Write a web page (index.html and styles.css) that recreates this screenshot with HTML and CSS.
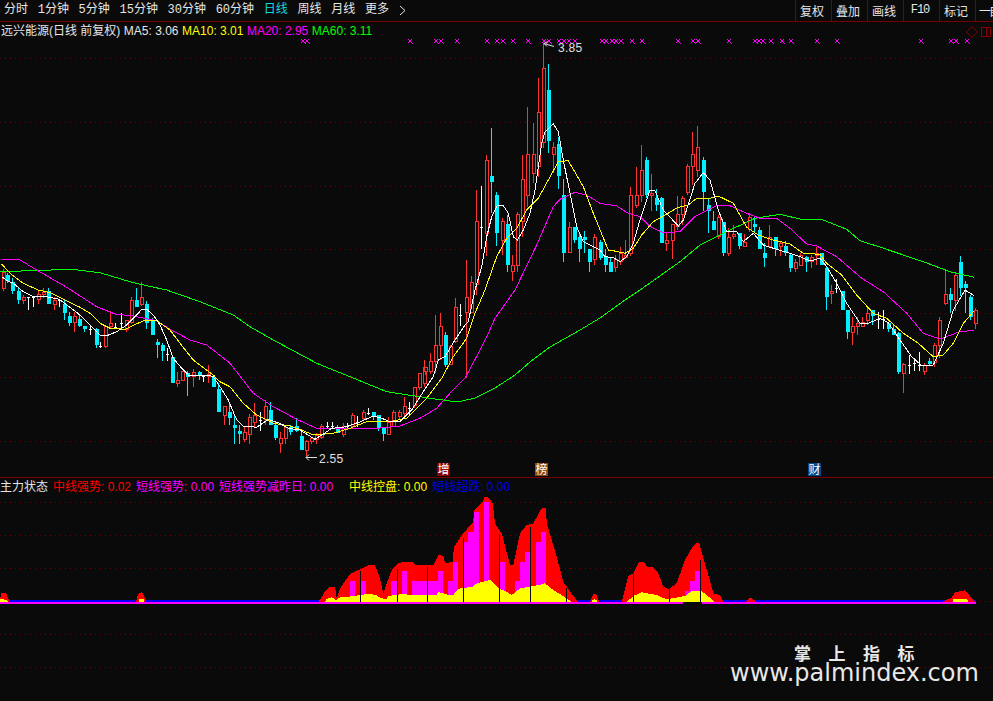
FILE: index.html
```html
<!DOCTYPE html>
<html lang="zh-CN">
<head>
<meta charset="utf-8">
<title>远兴能源 日线</title>
<link rel="stylesheet" href="styles.css">
</head>
<body>
<div class="terminal">
  <header class="toolbar">
    <nav class="periods">
      <span>分时</span><span>1分钟</span><span>5分钟</span><span>15分钟</span><span>30分钟</span><span>60分钟</span>
      <span class="active">日线</span><span>周线</span><span>月线</span><span>更多</span>
      <svg class="chevron" width="7" height="11" viewBox="0 0 7 11"><path d="M1 1l5 4.500-5 4.500" /></svg>
    </nav>
    <div class="tools">
      <span>复权</span><span>叠加</span><span>画线</span><span class="mono">F10</span><span>标记</span><span class="clip">一自</span>
    </div>
  </header>

  <section class="pane pane-main">
    <svg id="main-chart" class="chart" viewBox="0 22 993 455" width="993" height="455"></svg>
    <div class="legend">
      <span class="white">远兴能源(日线 前复权)</span>
      <span class="white">MA5: 3.06</span>
      <span class="yellow">MA10: 3.01</span>
      <span class="magenta">MA20: 2.95</span>
      <span class="green">MA60: 3.11</span>
    </div>
    <svg class="corner-icons" width="26" height="12" viewBox="0 0 26 12">
      <path d="M6 0.500l5.500 5.500-5.500 5.500-5.500-5.500z" />
      <path d="M15.500 1.500h9v9h-9zM20.500 1.500v9" />
    </svg>
  </section>

  <section class="pane pane-sub">
    <svg id="sub-chart" class="chart" viewBox="0 478 993 223" width="993" height="223"></svg>
    <div class="legend legend-sub">
      <span class="white">主力状态</span>
      <span class="red">中线强势: 0.02</span>
      <span class="magenta">短线强势: 0.00</span>
      <span class="magenta wide">短线强势减昨日: 0.00</span>
      <span class="yellow">中线控盘: 0.00</span>
      <span class="blue">短线超跌: 0.00</span>
    </div>
    <div class="watermark">
      <div class="wm-cn">掌上指标</div>
      <div class="wm-url">www.palmindex.com</div>
    </div>
  </section>
</div>
<script src="script.js"></script>
</body>
</html>
```
FILE: styles.css
```css
* { box-sizing: border-box; }
html, body { margin: 0; padding: 0; height: 100%; background: #0a0a0a; overflow: hidden; }
body { font-family: "Liberation Sans", "Noto Sans CJK SC", sans-serif; font-size: 12px; color: #e6e6e6; }
.terminal { width: 993px; height: 701px; display: flex; flex-direction: column; overflow: hidden; }

.toolbar { height: 22px; flex: none; display: flex; justify-content: space-between; border-bottom: 1px solid #7a0000; }
.periods { display: flex; align-items: center; gap: 9.7px; padding-left: 4px; font-family: "Liberation Mono", "Noto Sans CJK SC", monospace; line-height: 21px; }
.periods .active { color: #14d8e0; }
.chevron { fill: none; stroke: #e6e6e6; stroke-width: 1; }
.tools { display: flex; width: 198px; overflow: hidden; font-family: "Noto Sans CJK SC", sans-serif; }
.tools span { flex: none; width: 36px; padding-right: 3px; border-left: 1px solid #7a0000; text-align: center; line-height: 21px; white-space: nowrap; }
.tools .mono { font-family: "Liberation Mono", monospace; letter-spacing: -1px; }
.tools .clip { text-align: left; padding: 0 0 0 3px; margin-right: -20px; letter-spacing: -2px; }

.pane { position: relative; flex: none; }
.pane-main { height: 456px; border-bottom: 1px solid #7a0000; }
.pane-sub { height: 223px; }
.chart { position: absolute; left: 0; top: 0; display: block; }

.legend { position: absolute; left: 1px; top: 1px; display: flex; gap: 3.500px; line-height: 17px; white-space: nowrap; }
.legend-sub { left: 0; gap: 5px; }
.legend-sub .wide { margin-right: 11px; }
.white { color: #e6e6e6; }
.yellow { color: #ffff00; }
.magenta { color: #ff00ff; }
.green { color: #00ff00; }
.red { color: #ff0000; }
.blue { color: #0000e6; }

.corner-icons { position: absolute; right: 1px; top: 4px; fill: none; stroke: #8a0000; stroke-width: 1; }

.watermark { position: absolute; left: 730px; top: 163.500px; width: 250px; color: #e8e8e8; }
.wm-cn { padding-left: 64px; font-family: "Noto Sans CJK SC", sans-serif; font-weight: 700; font-size: 17px; letter-spacing: 17.500px; line-height: 21px; white-space: nowrap; }
.wm-url { font-family: "DejaVu Sans", sans-serif; font-size: 24px; line-height: 21px; white-space: nowrap; }

.grid-line { stroke: #6a0000; stroke-width: 1; stroke-dasharray: 1 4; }
.wick { stroke-width: 1; shape-rendering: crispEdges; }
.body { shape-rendering: crispEdges; }
.ma { fill: none; stroke-width: 1; shape-rendering: crispEdges; }
.mark { fill: none; stroke: #ff00ff; stroke-width: 1; shape-rendering: crispEdges; }
.note { fill: #e0e0e0; font-family: "Liberation Sans", sans-serif; font-size: 12px; letter-spacing: 0.3px; }
.note-line { fill: none; stroke: #e0e0e0; stroke-width: 1; }
.event-label { fill: #ffffff; font-family: "Noto Sans CJK SC", sans-serif; font-size: 12px; text-anchor: middle; }
.area { shape-rendering: crispEdges; }
```
FILE: script.js
```js
var NS = 'http://www.w3.org/2000/svg';
var BG = '#0a0a0a', RED = '#ff3232', CYAN = '#00f0ff', WHITE = '#ffffff';
var main = document.getElementById('main-chart');
var sub = document.getElementById('sub-chart');

function el(parent, tag, attrs, text) {
  var n = document.createElementNS(NS, tag);
  for (var k in attrs) n.setAttribute(k, attrs[k]);
  if (text) n.textContent = text;
  parent.appendChild(n);
  return n;
}
// Values below were read at 3x from the chart; each block has its own origin.
function toPage(ox, oy, flat) {
  var out = [];
  for (var i = 0; i < flat.length; i += 2) out.push([ox + flat[i] / 3, oy + flat[i + 1] / 3]);
  return out;
}

/* ---------- grid ---------- */
[58, 122, 186, 249, 313, 377, 441].forEach(function (y) {
  el(main, 'line', { 'class': 'grid-line', x1: 0, x2: 993, y1: y + 0.5, y2: y + 0.5 });
});
[502, 535, 568, 601, 634, 667].forEach(function (y) {
  el(sub, 'line', { 'class': 'grid-line', x1: 0, x2: 993, y1: y + 0.5, y2: y + 0.5 });
});

/* ---------- candles: [x, type, bodyTop, bodyBottom, high, low] ---------- */
var blocks = [
  { o: [0, 250], c: [
    [8,'r',67,118,57,122],[22,'c',75,92,68,100],[37,'c',95,122,85,132],[55,'c',122,150,113,162],[70,'r',142,152,135,162],
    [85,'w',142,142,142,180],[100,'w',142,142,142,170],[115,'r',133,150,122,162],[130,'r',125,135,115,145],[145,'c',124,162,115,162],
    [163,'r',150,165,142,180],[178,'w',150,150,150,172],[193,'c',162,190,150,210],[208,'c',198,220,185,228],[223,'r',198,220,185,245],
    [238,'c',208,228,195,230],[253,'c',228,238,228,245],[270,'w',238,238,225,255],[287,'c',237,285,235,295],[300,'w',287,287,277,295],
    [316,'r',228,290,225,295],[331,'r',220,232,183,235],[345,'w',232,232,220,235],[362,'w',220,220,190,235],[379,'r',210,240,210,245],
    [394,'r',150,220,142,222],[409,'c',150,170,115,170],[424,'r',142,165,97,168],[439,'c',162,218,152,237],[455,'c',212,255,205,255],
    [472,'c',277,285,268,323],[487,'c',285,303,280,332],[502,'w',312,312,295,332],[517,'c',322,398,322,398],[532,'r',390,402,365,410],
    [547,'r',363,392,362,392],[562,'c',370,380,362,437],[579,'r',365,380,358,410],[596,'c',365,378,362,390],[610,'w',378,378,375,395],
    [625,'r',372,382,345,398],[640,'c',382,410,375,410],[655,'c',420,462,400,462]
  ]},
  { o: [200, 340], c: [
    [54,'c',148,215,140,215],[73,'r',198,228,198,255],[88,'c',215,233,190,255],[103,'c',255,265,225,312],[118,'c',272,283,255,312],
    [133,'r',275,300,258,305],[148,'r',232,285,222,312],[163,'r',225,250,190,260],[180,'w',240,240,215,272],[196,'r',198,240,180,255],
    [211,'c',210,255,185,255],[226,'c',255,293,245,300],[241,'r',295,312,275,340],[256,'r',262,298,255,312],[271,'c',262,275,255,285],
    [289,'c',257,273,235,275],[304,'c',287,330,275,330],[319,'r',302,332,300,348],[334,'r',295,305,290,312],[349,'r',285,300,280,312],
    [364,'r',258,295,253,298],[380,'w',258,258,245,265],[396,'w',258,258,245,265],[411,'c',265,280,255,280],[428,'r',258,285,250,292],
    [442,'w',258,258,248,265],[457,'r',225,260,220,262],[472,'w',245,245,228,262],[490,'r',215,238,210,240],[505,'w',218,218,205,225],
    [520,'c',215,230,215,240],[535,'c',225,265,225,272],[550,'c',263,283,263,303],[565,'r',245,285,232,285],[580,'r',215,260,210,262],
    [598,'r',215,232,210,240],[613,'r',198,222,172,228],[628,'w',205,205,185,225],[643,'r',142,198,142,205],[658,'r',100,145,100,150],
    [673,'r',80,133,60,140]
  ]},
  { o: [425, 250], c: [
    [1,'r',350,365,350,375],[16,'r',333,365,310,372],[31,'r',285,335,195,370],[46,'r',228,287,190,330],[61,'c',255,345,247,350],
    [76,'r',287,345,285,345],[91,'r',172,277,145,280],[106,'w',195,195,162,228],[124,'r',142,190,30,385],[139,'r',95,190,78,190]
  ]},
  { o: [420, 40], c: [
    [169,'r',543,735,450,765],[184,'w',562,562,438,627],[199,'r',360,582,345,648],[214,'c',408,425,265,520],[229,'c',465,578,457,618],
    [247,'r',543,602,535,645],[262,'c',552,675,525,697],[277,'r',675,697,645,723],[292,'r',522,677,517,697],[307,'r',418,545,345,590],
    [322,'r',343,467,200,500],[340,'r',343,402,248,430],[355,'r',217,380,113,410],[370,'r',85,310,10,325],[385,'c',150,302,72,340],
    [400,'r',322,345,305,400],[415,'c',313,407,290,447],[430,'c',465,638,418,665],[448,'r',562,640,545,640],[463,'c',562,600,562,610],
    [478,'c',592,627,580,665],[493,'c',592,600,572,640],[508,'c',627,665,627,695],[523,'r',592,660,582,675]
  ]},
  { o: [600, 120], c: [
    [1,'c',365,415,360,420],[16,'c',407,435,388,455],[31,'c',425,455,415,455],[46,'r',418,445,405,455],[61,'r',400,425,380,435],
    [76,'r',405,415,360,418],[91,'r',225,402,200,408],[109,'r',225,258,140,265],[124,'r',150,228,75,245],[139,'c',120,225,112,233],
    [154,'r',218,228,162,272],[169,'c',233,255,208,272],[184,'c',235,368,232,368],[199,'r',360,372,335,392],[217,'r',312,362,312,417],
    [232,'r',282,322,228,330],[247,'r',235,285,228,315],[262,'r',138,220,132,225],[277,'r',102,140,35,195],[292,'r',82,152,18,172],
    [310,'c',120,217,112,272],[325,'c',255,272,235,340],[340,'c',303,330,272,330],[355,'r',292,352,285,358],[370,'c',305,398,305,408],
    [385,'r',352,402,325,408],[400,'r',342,352,315,358],[418,'c',340,378,340,388],[433,'r',365,380,342,380],[448,'r',292,330,278,335],
    [463,'c',312,320,290,335],[478,'c',330,387,320,388],[493,'c',400,415,370,442],[508,'r',352,380,315,385],[526,'c',350,387,350,408],
    [541,'r',370,380,365,408],[556,'c',378,400,362,408]
  ]},
  { o: [790, 220], c: [
    [1,'c',105,145,98,155],[16,'r',125,148,118,155],[31,'r',105,137,100,137],[49,'c',110,125,108,155],[64,'r',110,125,105,143],
    [79,'r',100,108,80,135],[94,'c',100,135,98,135],[109,'c',145,230,140,270],[124,'r',213,223,195,252],[139,'w',205,205,178,220],
    [157,'c',213,270,213,270],[172,'c',270,335,270,357],[187,'r',318,338,290,375],[202,'r',310,320,290,345],[217,'r',305,320,290,320],
    [232,'r',280,303,263,315],[247,'c',270,288,270,315],[265,'w',298,298,275,327],[280,'w',298,298,270,327],[295,'c',308,327,308,335],
    [310,'c',327,345,315,345],[325,'c',338,455,335,462],[340,'r',432,463,428,518],[358,'w',435,435,405,462],[373,'w',430,430,415,452],
    [388,'w',435,435,395,452],[403,'r',435,457,428,465],[418,'c',422,433,415,437],[433,'r',375,430,370,440],[448,'r',300,378,292,415],
    [466,'r',222,253,148,255],[481,'c',222,240,205,278],[496,'r',165,243,160,272],[511,'c',127,205,108,228],[526,'c',192,205,183,278],
    [541,'c',232,290,225,300],[556,'r',270,312,265,327]
  ]}
];

blocks.forEach(function (b) {
  b.c.forEach(function (d) {
    var x = Math.round(b.o[0] + d[0] / 3);
    var top = Math.round(b.o[1] + d[2] / 3), bot = Math.round(b.o[1] + d[3] / 3);
    var hi = Math.round(b.o[1] + d[4] / 3), lo = Math.round(b.o[1] + d[5] / 3);
    var col = d[1] === 'r' ? RED : d[1] === 'c' ? CYAN : WHITE;
    el(main, 'line', { 'class': 'wick', x1: x + 0.5, x2: x + 0.5, y1: hi, y2: lo, stroke: col });
    if (d[1] === 'w') {
      el(main, 'line', { 'class': 'wick', x1: x - 1, x2: x + 2, y1: top + 0.5, y2: top + 0.5, stroke: col });
    } else if (d[1] === 'c') {
      el(main, 'rect', { 'class': 'body', x: x - 1, y: top, width: 4, height: Math.max(bot - top, 1), fill: CYAN });
    } else {
      el(main, 'rect', { 'class': 'body', x: x - 0.5, y: top + 0.5, width: 3, height: Math.max(bot - top - 1, 1), fill: BG, stroke: RED });
    }
  });
});

/* ---------- moving averages ---------- */
function ma(color, parts) {
  var pts = [];
  parts.forEach(function (p) { pts = pts.concat(toPage(p[0], p[1], p[2])); });
  el(main, 'polyline', { 'class': 'ma', stroke: color, points: pts.map(function (q) { return q[0].toFixed(1) + ',' + q[1].toFixed(1); }).join(' ') });
}
ma('#00ff00', [
  [0, 250, [0,65,90,62,215,58,300,68,400,98,500,120,600,155,700,195,750,230]],
  [200, 340, [220,0,350,70,450,110,560,155,690,175,750,183]],
  [0, 0, [1386,1203,1425,1194,1485,1164,1545,1125,1590,1086,1650,1041,1740,990,1800,954,1875,900]],
  [600, 120, [120,510,240,425,300,375,390,330,465,295,540,283,600,297]],
  [790, 220, [100,0,170,28,210,62,260,78,400,125,480,155,553,172]]
]);
ma('#ff00ff', [
  [0, 250, [5,28,60,30,110,60,200,112,290,170,345,192,400,198,470,212,510,238,570,270,620,285]],
  [200, 340, [40,30,90,70,160,160,220,200,290,238,350,265,420,265,530,265,600,258,660,235,710,205,750,160]],
  [425, 250, [120,385,165,300,190,250,210,205]],
  [420, 40, [285,750,350,615,400,500,420,478,465,457,500,465]],
  [600, 120, [0,250,50,258,85,280,120,290,150,320,190,338,240,335,285,290,350,257,385,255,440,280,480,295,530,295]],
  [790, 220, [0,25,50,72,80,78,140,110,215,175,280,215,350,280,400,340,450,357,510,335,553,331]]
]);
ma('#ffff00', [
  [0, 250, [5,42,30,70,70,100,115,120,150,128,200,152,240,172,270,190,300,220,330,235,375,238,435,210,470,212,510,240,540,280,580,330,640,375]],
  [200, 340, [60,125,90,140,130,190,170,225,220,250,270,258,300,268,340,285,400,280,450,265,500,245,570,245,620,235,680,175]],
  [425, 250, [50,385,85,320,125,265,150,190]],
  [420, 40, [195,750,230,650,260,595,290,565,320,510,355,475,385,420,415,365,445,362,490,440,520,520,565,630]],
  [600, 120, [30,390,75,400,100,385,125,345,160,305,235,262,265,255,290,235,330,235,355,228,400,250,440,322,475,345,520,360]],
  [790, 220, [0,72,40,100,90,103,110,130,155,165,200,225,250,280,290,295,340,340,385,370,430,410,460,405,490,370,520,310,553,272]]
]);
ma('#ffffff', [
  [0, 250, [5,80,22,92,40,100,70,125,100,140,130,138,178,148,200,165,240,195,270,225,300,255,320,257,350,245,380,225,410,195,425,178,440,178,460,195,480,225,500,270,520,325,545,355,565,375,620,375]],
  [200, 340, [40,110,60,140,85,180,110,240,130,258,170,262,205,238,235,248,265,265,300,270,345,298,365,285,395,265,430,262,470,250,520,228,545,235,570,245,600,245,635,210,670,155]],
  [425, 250, [25,380,40,330,60,320,90,270,120,225,130,215]],
  [420, 40, [165,750,185,680,200,590,215,530,232,497,250,497,265,520,280,590,292,600,310,570,330,520,345,450,365,310,375,275,400,252,415,275,430,360,450,460,470,560,490,605,530,625]],
  [600, 120, [0,390,15,410,40,413,60,425,80,410,100,370,120,300,150,210,165,212,190,270,235,318,250,300,285,190,310,158,330,180,355,270,380,335,410,335,430,365,460,340,490,375,520,385,570,400]],
  [790, 220, [30,110,60,123,90,115,110,140,140,190,170,250,210,310,235,310,270,295,295,308,330,360,365,410,395,437,430,435,460,370,490,270,525,210,553,227]]
]);

/* ---------- signal marks ---------- */
[303,307,410,436,441,457,487,497,503,513,528,544,549,559,564,569,575,602,606,612,616,621,632,642,678,693,698,729,755,759,763,771,782,791,817,837,921,951,956,967].forEach(function (x) {
  el(main, 'path', { 'class': 'mark', d: 'M' + (x - 2) + ' 39l5 5M' + (x + 2) + ' 39l-4 4' });
});

/* ---------- price notes ---------- */
el(main, 'path', { 'class': 'note-line', d: 'M544 43.500l10 3M544 43.500l4-2M544 43.500l3 3' });
el(main, 'text', { 'class': 'note', x: 558, y: 52 }, '3.85');
el(main, 'path', { 'class': 'note-line', d: 'M306 457.500h11M306 457.500l3-3M306 457.500l3 3' });
el(main, 'text', { 'class': 'note', x: 319, y: 463 }, '2.55');

/* ---------- event flags ---------- */
[[437, '#8b0000', '增'], [535, '#8b4a12', '榜'], [808, '#004a8b', '财']].forEach(function (f) {
  el(main, 'rect', { x: f[0], y: 463, width: 13, height: 13, fill: f[1] });
  el(main, 'text', { 'class': 'event-label', x: f[0] + 6.5, y: 474 }, f[2]);
});

/* ---------- lower pane ---------- */
el(sub, 'rect', { 'class': 'area', x: 0, y: 602, width: 976, height: 1.5, fill: '#ff00ff' });
el(sub, 'rect', { 'class': 'area', x: 683, y: 602, width: 19, height: 2, fill: BG });
el(sub, 'rect', { 'class': 'area', x: 0, y: 600, width: 976, height: 2, fill: '#0000ff' });

function area(color, pts) {
  el(sub, 'polygon', { 'class': 'area', fill: color, points: pts.map(function (q) { return q[0].toFixed(1) + ',' + q[1].toFixed(1); }).join(' ') });
}
var Z4 = function (f) { return toPage(300, 490, f); };
var Z5 = function (f) { return toPage(560, 520, f); };

// red
area('#ff0000', [[0,602],[1,593],[6,593],[9,600],[9,602]]);
area('#ff0000', [[136,602],[138,594],[142,592],[146,600],[146,602]]);
area('#ff0000', Z4([55,336,75,305,90,290,105,290,110,325,120,295,150,252,180,238,205,226,225,226,240,265,250,310,255,295,275,240,295,218,335,215,345,225,400,225,415,195,430,198,435,220,458,215,462,170,490,130,520,95,522,60,550,35,552,22,565,22,578,40,585,100,605,130,630,225,640,225,660,130,680,105,700,100,725,55,738,55,740,100,770,200,790,275,810,305,835,336]));
area('#ff0000', Z4([870,336,885,310,895,336]));
area('#ff0000', Z5([90,246,100,222,108,222,118,246]));
area('#ff0000', Z5([185,246,205,168,220,160,238,125,250,125,262,140,280,142,295,160,310,200,325,208,350,190,375,120,395,85,408,70,418,70,430,115,445,165,460,220,480,225,490,246]));
area('#ff0000', Z5([555,246,570,232,590,246]));
area('#ff0000', Z5([1145,246,1175,233,1185,217,1215,211,1225,222,1245,246]));

// magenta columns
[[150,165,273],[180,198,273],[272,290,272],[305,322,243],[335,413,273],[413,428,243],[443,458,273],[458,475,215],[490,505,155],[505,522,125],[522,537,65],[552,567,35],[598,615,215],[645,660,273],[660,675,215],[675,690,185],[708,723,155],[723,738,125]].forEach(function (m) {
  el(sub, 'rect', { 'class': 'area', x: 300 + m[0] / 3, y: 490 + m[2] / 3, width: (m[1] - m[0]) / 3, height: 602 - 490 - m[2] / 3, fill: '#ff00ff' });
});
[[375,390,213],[390,405,183],[405,420,153]].forEach(function (m) {
  el(sub, 'rect', { 'class': 'area', x: 560 + m[0] / 3, y: 520 + m[2] / 3, width: (m[1] - m[0]) / 3, height: 602 - 520 - m[2] / 3, fill: '#ff00ff' });
});

// yellow
area('#ffff00', [[0,602],[0,599],[7,600],[8,602]]);
area('#ffff00', [[139,602],[139,599],[144,599],[144,602]]);
area('#ffff00', Z4([75,336,78,328,95,322,108,330,120,322,148,320,180,315,205,312,225,314,245,325,258,328,265,318,290,315,305,312,335,315,410,315,415,306,430,310,445,315,460,315,475,296,520,290,525,282,550,275,572,270,585,285,600,297,620,305,635,315,645,308,660,295,690,290,725,283,735,280,760,300,800,325,815,336]));
area('#ffff00', Z4([875,336,877,330,890,330,892,336]));
area('#ffff00', Z5([95,246,103,237,110,246]));
area('#ffff00', Z5([200,246,220,228,245,217,290,225,320,238,375,228,395,213,425,213,465,246]));
area('#ffff00', Z5([1180,246,1180,237,1222,237,1225,246]));

// gaps between columns
[[360,571],[397,569],[427,567],[463,538],[499,535],[530,527],[566,588],[633,574],[669,574],[700,560]].forEach(function (b) {
  el(sub, 'rect', { 'class': 'area', x: b[0], y: b[1], width: 1, height: 602 - b[1], fill: BG });
});
```
